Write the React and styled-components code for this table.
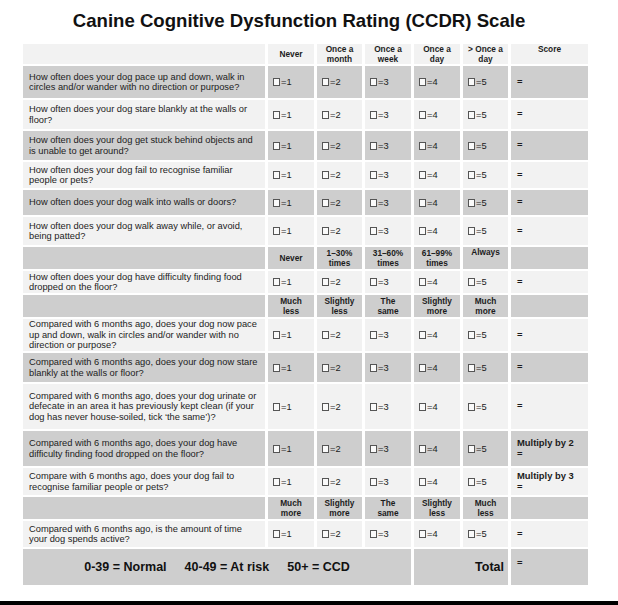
import React from 'react';
import styled, { createGlobalStyle } from 'styled-components';

const GlobalStyle = createGlobalStyle`
  html, body {
    margin: 0;
    padding: 0;
    background: #fff;
  }
  body {
    font-family: "Liberation Sans", Arial, Helvetica, sans-serif;
    color: #1c1c1c;
  }
`;

const COLS = '242px 46px 45px 46px 46px 45px 77px';

const Page = styled.div`
  width: 618px;
  height: 605px;
  display: flex;
  flex-direction: column;
  background: #fff;
  overflow: hidden;
`;

const Title = styled.h1`
  margin: 12px 20px 14px 0;
  font-size: 18.6px;
  line-height: 18px;
  font-weight: bold;
  text-align: center;
  color: #111;
  white-space: nowrap;
`;

const Table = styled.div`
  margin-left: 23px;
  width: 565px;
  display: flex;
  flex-direction: column;
  gap: 2px;
`;

const Row = styled.div`
  display: grid;
  grid-template-columns: ${COLS};
  column-gap: 3px;
  height: ${(p) => p.$h}px;
`;

const Cell = styled.div`
  background: ${(p) => (p.$dark ? '#cecece' : '#f2f2f2')};
  display: flex;
  min-width: 0;
`;

const QuestionCell = styled(Cell)`
  align-items: center;
  padding-left: 6px;
  font-size: 9.3px;
  line-height: 10.5px;
  white-space: pre-line;
  color: #1c1c1c;
`;

const HeadCell = styled(Cell)`
  align-items: ${(p) => (p.$top ? 'flex-start' : 'center')};
  justify-content: center;
  text-align: center;
  font-size: 8.3px;
  line-height: 10px;
  font-weight: bold;
  white-space: pre-line;
  color: #1c1c1c;
`;

const OptionCell = styled(Cell)`
  align-items: center;
  padding-left: 5px;
  font-size: 9.3px;
`;

const Box = styled.span`
  display: inline-block;
  width: 7px;
  height: 8px;
  border: 1px solid #555;
  box-sizing: border-box;
  background: #fafafa;
  margin-right: 1px;
`;

const ScoreCell = styled(Cell)`
  align-items: center;
  padding-left: 6px;
  font-size: 9.4px;
  line-height: 10.5px;
  font-weight: bold;
  white-space: pre-line;
`;

const RangeCell = styled(Cell)`
  grid-column: span 4;
  align-items: center;
  justify-content: center;
  gap: 18px;
  font-size: 12.5px;
  font-weight: bold;
  color: #111;
`;

const TotalCell = styled(Cell)`
  grid-column: span 2;
  align-items: center;
  justify-content: flex-end;
  padding-right: 4px;
  font-size: 12.5px;
  font-weight: bold;
  color: #111;
`;

const FooterScore = styled(ScoreCell)`
  align-items: flex-start;
  padding-top: 9px;
`;

const BottomBar = styled.div`
  margin-top: auto;
  height: 4px;
  background: #000;
`;

const FREQ = ['Never', 'Once a\nmonth', 'Once a\nweek', 'Once a\nday', '> Once a\nday'];
const TIMES = ['Never', '1–30%\ntimes', '31–60%\ntimes', '61–99%\ntimes', 'Always'];
const LESS = ['Much\nless', 'Slightly\nless', 'The\nsame', 'Slightly\nmore', 'Much\nmore'];
const MORE = ['Much\nmore', 'Slightly\nmore', 'The\nsame', 'Slightly\nless', 'Much\nless'];

const rows = [
  { type: 'head', h: 20, dark: false, labels: FREQ, score: 'Score', top: [false, false, false, false, false] },
  { h: 32, dark: true, q: 'How often does your dog pace up and down, walk in\ncircles and/or wander with no direction or purpose?' },
  { h: 29, dark: false, q: 'How often does your dog stare blankly at the walls or\nfloor?' },
  { h: 29, dark: true, q: 'How often does your dog get stuck behind objects and\nis unable to get around?' },
  { h: 26, dark: false, q: 'How often does your dog fail to recognise familiar\npeople or pets?' },
  { h: 25, dark: true, q: 'How often does your dog walk into walls or doors?' },
  { h: 28, dark: false, q: 'How often does your dog walk away while, or avoid,\nbeing patted?' },
  { type: 'head', h: 22, dark: true, labels: TIMES, score: '', top: [false, false, false, false, true] },
  { h: 22, dark: false, q: 'How often does your dog have difficulty finding food\ndropped on the floor?' },
  { type: 'head', h: 22, dark: true, labels: LESS, score: '' },
  { h: 32, dark: false, q: 'Compared with 6 months ago, does your dog now pace\nup and down, walk in circles and/or wander with no\ndirection or purpose?' },
  { h: 29, dark: true, q: 'Compared with 6 months ago, does your dog now stare\nblankly at the walls or floor?' },
  { h: 45, dark: false, q: 'Compared with 6 months ago, does your dog urinate or\ndefecate in an area it has previously kept clean (if your\ndog has never house-soiled, tick ‘the same’)?' },
  { h: 35, dark: true, q: 'Compared with 6 months ago, does your dog have\ndifficulty finding food dropped on the floor?', score: 'Multiply by 2\n=' },
  { h: 27, dark: false, q: 'Compare with 6 months ago, does your dog fail to\nrecognise familiar people or pets?', score: 'Multiply by 3\n=' },
  { type: 'head', h: 22, dark: true, labels: MORE, score: '' },
  { h: 26, dark: false, q: 'Compared with 6 months ago, is the amount of time\nyour dog spends active?' },
];

const HeaderRow = ({ row }) => (
  <Row $h={row.h}>
    <Cell $dark={row.dark} />
    {row.labels.map((l, i) => (
      <HeadCell key={i} $dark={row.dark} $top={row.top && row.top[i]}>
        {l}
      </HeadCell>
    ))}
    <HeadCell $dark={row.dark} $top>
      {row.score}
    </HeadCell>
  </Row>
);

const QuestionRow = ({ row }) => (
  <Row $h={row.h}>
    <QuestionCell $dark={row.dark}>{row.q}</QuestionCell>
    {[1, 2, 3, 4, 5].map((n) => (
      <OptionCell key={n} $dark={row.dark}>
        <Box />={n}
      </OptionCell>
    ))}
    <ScoreCell $dark={row.dark}>{row.score || '='}</ScoreCell>
  </Row>
);

export default function App() {
  return (
    <Page>
      <GlobalStyle />
      <Title>Canine Cognitive Dysfunction Rating (CCDR) Scale</Title>
      <Table>
        {rows.map((row, i) =>
          row.type === 'head' ? <HeaderRow key={i} row={row} /> : <QuestionRow key={i} row={row} />
        )}
        <Row $h={36}>
          <RangeCell $dark>
            <span>0-39 = Normal</span>
            <span>40-49 = At risk</span>
            <span>50+ = CCD</span>
          </RangeCell>
          <TotalCell $dark>Total</TotalCell>
          <FooterScore $dark>=</FooterScore>
        </Row>
      </Table>
      <BottomBar />
    </Page>
  );
}
